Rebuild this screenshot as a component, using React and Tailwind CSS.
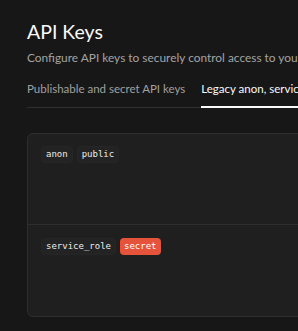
export default function App() {
  const sans = { fontFamily: 'Lato, "Noto Sans", sans-serif' };
  return (
    <div className="w-[298px] h-[331px] overflow-hidden bg-[#171717]" style={sans}>
      <div className="w-[800px] pl-[27px] pt-[20px]">
        <h1 className="text-[19.5px] leading-[24px] text-[#fafafa] font-normal">API Keys</h1>
        <p className="mt-[6px] text-[11.9px] leading-[16px] text-[#a3a3a3] whitespace-nowrap">
          Configure API keys to securely control access to your project
        </p>
        <div className="mt-[15px] flex border-b border-[#2e2e2e] text-[11.5px] leading-[16px] whitespace-nowrap">
          <div className="pb-[10px] mr-[16px] text-[#a0a0a0]">Publishable and secret API keys</div>
          <div className="pb-[9px] text-[#fafafa] border-b-2 border-[#fafafa] -mb-px">Legacy anon, service_role API keys</div>
        </div>
        <div className="mt-[25px] w-[700px] rounded-[6px] border border-[#2e2e2e] bg-[#1f1f1f]">
          <div className="h-[91px] px-[13px] pt-[12px] border-b border-[#2e2e2e]">
            <div className="flex gap-[4px]">
              <Badge>anon</Badge>
              <Badge>public</Badge>
            </div>
          </div>
          <div className="h-[91px] px-[13px] pt-[13px]">
            <div className="flex gap-[4px]">
              <Badge>service_role</Badge>
              <span className="h-[17px] px-[4px] rounded-[4px] bg-[#e5533a] text-white text-[9px] leading-[17px]" style={{ fontFamily: '"DejaVu Sans Mono", monospace' }}>secret</span>
            </div>
          </div>
        </div>
      </div>
    </div>
  );
}

function Badge({ children }) {
  return (
    <span
      className="h-[17px] px-[4px] rounded-[4px] bg-[#232323] border border-[#262626] text-[#ededed] text-[9px] leading-[15px]"
      style={{ fontFamily: '"DejaVu Sans Mono", monospace' }}
    >
      {children}
    </span>
  );
}
